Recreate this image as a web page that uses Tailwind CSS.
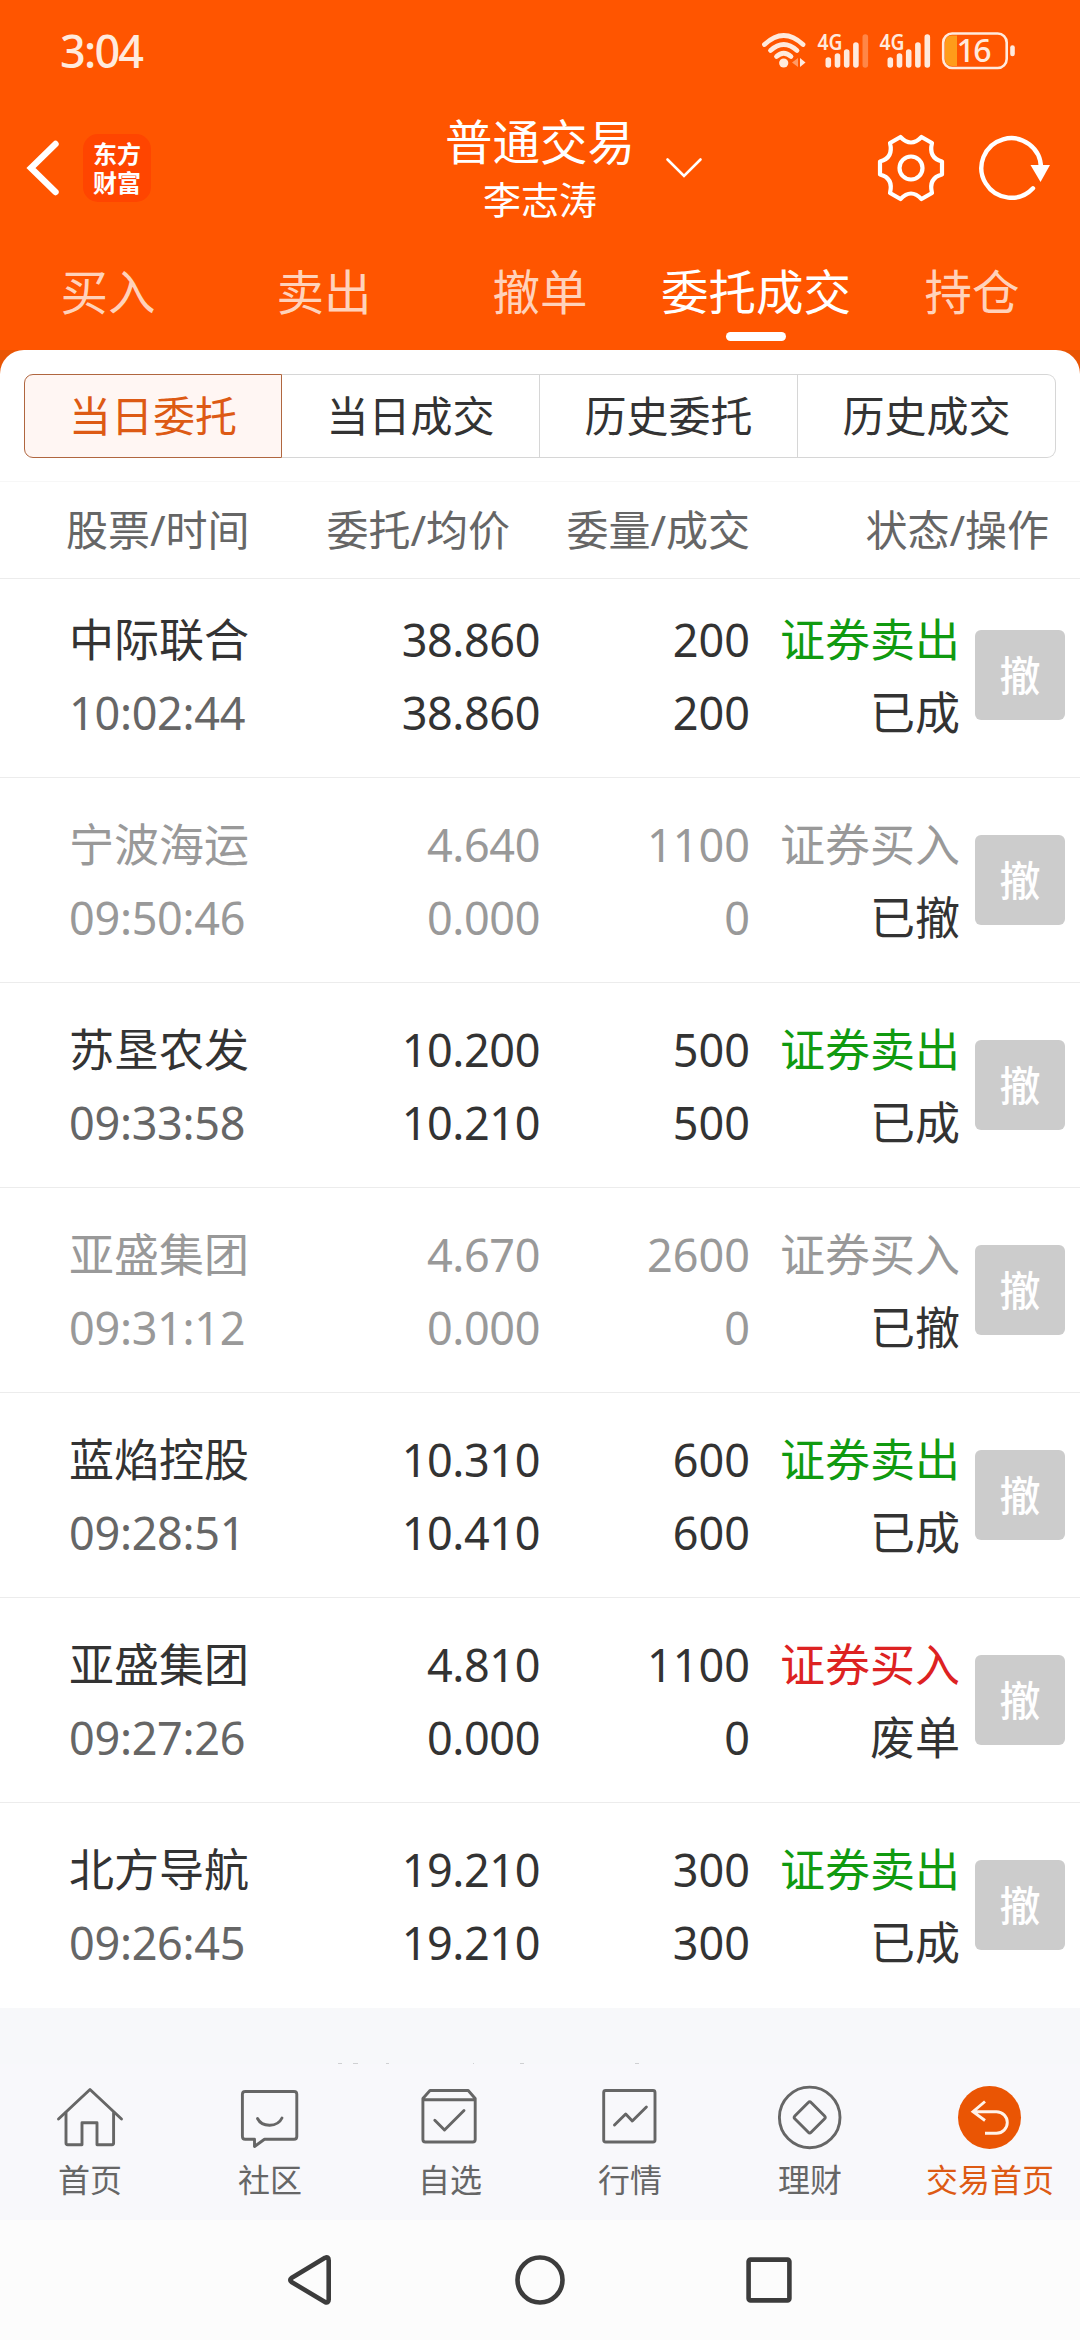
<!DOCTYPE html>
<html lang="zh-CN">
<head>
    <meta charset="UTF-8">
    <meta name="viewport" content="width=device-width, initial-scale=1.0">
    <title>普通交易 - 委托成交</title>
    <script src="https://cdn.jsdelivr.net/npm/@tailwindcss/browser@4"></script>
</head>
<body class="w-[1080px] h-[2340px] overflow-hidden flex flex-col bg-white text-[#333] font-['Noto_Sans','Noto_Sans_CJK_SC',sans-serif]">

    <!-- Header -->
    <header class="h-[350px] shrink-0 bg-[#ff5500] text-white flex flex-col">
        <!-- Status bar -->
        <div class="h-[102px] shrink-0 flex justify-between items-center pl-[60px] pr-[64px] text-[#ffeadd]">
            <span class="text-[45px] leading-[60px] font-medium tracking-[-1.8px]">3:04</span>
            <svg class="w-[256px] h-[60px]" viewBox="760 21 256 60" fill="none" stroke="currentColor" stroke-linecap="round">
                <g stroke-width="4.800">
                    <path d="M764.5 44.500 Q783.700 26.500 803 44.500"/>
                    <path d="M770.500 50.500 Q783.700 38.500 797 50.500"/>
                    <path d="M776.500 56.500 Q783.700 50 791 56.500"/>
                </g>
                <circle cx="783.700" cy="63" r="4.600" fill="currentColor" stroke="none"/>
                <path d="M798 58 V67 L792 62.500Z" fill="#ff9a66" stroke="none"/>
                <path d="M800 58 L805.500 62.500 L800 67Z" fill="currentColor" stroke="none"/>
                <g stroke-width="5.600">
                    <path d="M828.300 60V65M837.500 56V65M846.700 52V65M855.900 45V65"/>
                    <path d="M865.300 37V65" stroke="#ff8647"/>
                    <path d="M890.300 60V65M899.500 56V65M908.700 52V65M917.900 45V65M927.300 37V65"/>
                </g>
                <g fill="currentColor" stroke="none" font-family="Noto Sans, sans-serif" font-weight="600" font-size="22">
                    <text x="817.500" y="50" textLength="25" lengthAdjust="spacingAndGlyphs">4G</text>
                    <text x="879.500" y="50" textLength="25" lengthAdjust="spacingAndGlyphs">4G</text>
                </g>
                <path d="M952 35.500H957V66H952Q945 66 945 59V42.500Q945 35.500 952 35.500Z" fill="#ff9c1a" stroke="none"/>
                <text x="956.500" y="62" fill="currentColor" stroke="none" font-family="Noto Sans, sans-serif" font-weight="500" font-size="32" textLength="35">16</text>
                <rect x="943.200" y="33.500" width="63.500" height="34.500" rx="9" stroke-width="2.600"/>
                <path d="M1012.500 47.500V54" stroke-width="4.600"/>
            </svg>
        </div>

        <!-- Title bar -->
        <div class="h-[138px] shrink-0 grid grid-cols-[1fr_auto_1fr] items-center">
            <div class="flex items-center pl-[24px] pb-[6px]">
                <svg class="w-[40px] h-[60px]" viewBox="24 138.500 40 60" fill="none" stroke="currentColor" stroke-width="6.400" stroke-linecap="round" stroke-linejoin="miter">
                    <path d="M55.500 144.500 L31 168.500 L55.500 192.500"/>
                </svg>
                <div class="ml-[19px] w-[68px] h-[68px] rounded-[15px] bg-[#ff4500] flex flex-col items-center justify-center text-[24px] leading-[29px] font-bold">
                    <span>东方</span>
                    <span>财富</span>
                </div>
            </div>
            <div class="relative flex flex-col items-center pb-[5px]">
                <div class="text-[47.5px] leading-[61px]">普通交易</div>
                <div class="text-[38px] leading-[55px]">李志涛</div>
                <svg class="absolute left-full top-[43px] ml-[27px] w-[44px] h-[28px]" viewBox="662 154 44 28" fill="none" stroke="currentColor" stroke-width="2.600" stroke-linecap="round">
                    <path d="M667.500 159.500 L684 176 L700.500 159.500"/>
                </svg>
            </div>
            <div class="flex justify-end items-center gap-[30px] pr-[28px] pb-[6px]">
                <svg class="w-[70px] h-[70px]" viewBox="-35 -35 70 70" fill="none" stroke="currentColor" stroke-width="4.200" stroke-linejoin="round">
                    <path d="M-10.500-31 Q0-20 10.500-31 L21-25 Q17.300-10 31-6.500 V6.500 Q17.300 10 21 25 L10.500 31 Q0 20 -10.500 31 L-21 25 Q-17.300 10 -31 6.500 V-6.500 Q-17.300-10 -21-25Z"/>
                    <circle r="11.500"/>
                </svg>
                <svg class="w-[76px] h-[70px]" viewBox="976 133 76 70" fill="none" stroke="currentColor" stroke-width="4.400" stroke-linecap="round">
                    <path d="M1041 168 A29.800 29.800 0 1 0 1033 188.300"/>
                    <path d="M1030.500 165 H1050 L1040.500 182Z" fill="currentColor" stroke="none"/>
                </svg>
            </div>
        </div>

        <!-- Main tabs -->
        <nav class="grid grid-cols-5 text-center text-[47.5px] leading-[64px] text-[#ffd2bb] pt-[20px]">
            <a>买入</a>
            <a>卖出</a>
            <a>撤单</a>
            <a class="text-white flex flex-col items-center">
                <span>委托成交</span>
                <span class="w-[60px] h-[9px] mt-[8px] rounded-full bg-white"></span>
            </a>
            <a>持仓</a>
        </nav>
    </header>

    <main class="shrink-0 bg-[#e95504]">
        <div class="bg-white rounded-t-[24px] pt-[24px]">
            <!-- Segmented control -->
            <div class="mx-[24px] h-[84px] grid grid-cols-4 text-[42px] text-center leading-[82px]">
                <a class="border border-[#b0663f] rounded-l-[9px] bg-[#fff6f3] text-[#dd5a14]">当日委托</a>
                <a class="border border-l-0 border-[#d6d6d6]">当日成交</a>
                <a class="border border-l-0 border-[#d6d6d6]">历史委托</a>
                <a class="border border-l-0 border-[#d6d6d6] rounded-r-[9px]">历史成交</a>
            </div>

            <!-- Column titles -->
            <div class="mt-[23px] h-[98px] border-y border-t-[#f7f7f7] border-b-[#ececec] grid grid-cols-[510px_240px_299px] text-[42px] leading-[96px] text-[#666] text-right">
                <div class="flex justify-between pl-[66px]"><span>股票/时间</span><span>委托/均价</span></div>
                <span>委量/成交</span>
                <span>状态/操作</span>
            </div>
        </div>
    </main>

    <!-- Order rows -->
    <section id="orderList" class="h-[1429px] shrink-0 overflow-hidden flex flex-col justify-end bg-white"></section>

    <!-- Next line of the list, nearly hidden by the tab bar -->
    <div class="h-[56px] shrink-0 bg-[#f7f8fa] flex items-end">
        <svg class="w-[1080px] h-[1px]" viewBox="0 0 1080 1" fill="#cfd0d2">
            <path d="M338 0h4v1h-4zM353 0h5v1h-5zM386 0h3v1h-3zM473 0h1v1h-1zM520 0h4v1h-4zM635 0h4v1h-4z"/>
        </svg>
    </div>

    <!-- Bottom tab bar -->
    <nav class="h-[156px] shrink-0 bg-[#f8f8fb] pt-[16px] grid grid-cols-6 text-[32px] leading-[46px] text-[#666]">
        <a class="flex flex-col items-center gap-[5px]">
            <svg class="w-[72px] h-[72px]" viewBox="0 0 72 72" fill="none" stroke="currentColor" stroke-width="2.900" stroke-linecap="round" stroke-linejoin="round">
                <path d="M4.500 39 L36 9.500 L67.500 39"/>
                <path d="M12 33V63Q12 64.700 13.700 64.700H28V42.700H43V64.700H58Q59.600 64.700 59.600 63V33"/>
            </svg>
            <span>首页</span>
        </a>
        <a class="flex flex-col items-center gap-[5px]">
            <svg class="w-[72px] h-[72px]" viewBox="0 0 72 72" fill="none" stroke="currentColor" stroke-width="2.900" stroke-linecap="round" stroke-linejoin="round">
                <path d="M11 11.500H60Q62.800 11.500 62.800 14.300V56.500Q62.800 59.300 60 59.300H30.500L20.500 66.500V59.300H11.200Q8.400 59.300 8.400 56.500V14.300Q8.400 11.500 11.200 11.500Z"/>
                <path d="M23.500 38.500C28 47.500 43.500 47.500 48 38"/>
            </svg>
            <span>社区</span>
        </a>
        <a class="flex flex-col items-center gap-[5px]">
            <svg class="w-[72px] h-[72px]" viewBox="0 0 72 72" fill="none" stroke="currentColor" stroke-width="2.900" stroke-linecap="round" stroke-linejoin="round">
                <path d="M8.900 18.500 L16 10.500H54.200L61.200 18.500V59.500Q61.200 62 58.700 62H11.400Q8.900 62 8.900 59.500ZM9 19.800H61"/>
                <path d="M20.800 40.200 L30.500 50 L50 30.500"/>
            </svg>
            <span>自选</span>
        </a>
        <a class="flex flex-col items-center gap-[5px]">
            <svg class="w-[72px] h-[72px]" viewBox="0 0 72 72" fill="none" stroke="currentColor" stroke-width="2.900" stroke-linecap="round" stroke-linejoin="round">
                <rect x="9.700" y="10.500" width="51.300" height="51.500" rx="2"/>
                <path d="M20.500 45 L31.700 34 L38.300 41 L52.400 27"/>
            </svg>
            <span>行情</span>
        </a>
        <a class="flex flex-col items-center gap-[5px]">
            <svg class="w-[72px] h-[72px]" viewBox="0 0 72 72" fill="none" stroke="currentColor" stroke-width="2.900" stroke-linejoin="round">
                <circle cx="35.700" cy="37.400" r="30.300"/>
                <path d="M34.300 22.500Q35.700 21 37.100 22.500L50.600 36Q52 37.400 50.600 38.800L37.100 52.300Q35.700 53.800 34.300 52.300L20.800 38.800Q19.400 37.400 20.800 36Z"/>
            </svg>
            <span>理财</span>
        </a>
        <a class="flex flex-col items-center gap-[5px] text-[#dd5a14]">
            <svg class="w-[72px] h-[72px]" viewBox="0 0 72 72" fill="none" stroke="#fff3ea" stroke-width="2.900">
                <circle cx="35.500" cy="37.400" r="31.500" fill="#ea5504" stroke="none"/>
                <path d="M31 21.500 L19 31.700 L31 40.500M19 31.700H42.500A10.800 10.800 0 0 1 42.500 53.300H31"/>
            </svg>
            <span>交易首页</span>
        </a>
    </nav>

    <!-- System navigation -->
    <div class="h-[120px] shrink-0 bg-[#fcfcfc] flex justify-center items-center gap-[169px] text-[#3c3c3c]">
        <svg class="w-[60px] h-[60px]" viewBox="280 2250 60 60" fill="none" stroke="currentColor" stroke-width="4.600" stroke-linejoin="round">
            <path d="M324 2257.800 L290.500 2278 Q288 2280 290.500 2282 L324 2302 Q327.700 2303.500 327.700 2299.500 V2260.500 Q327.700 2256.300 324 2257.800Z"/>
        </svg>
        <svg class="w-[60px] h-[60px]" viewBox="-30 -30 60 60" fill="none" stroke="currentColor" stroke-width="4.600">
            <circle r="22.500"/>
        </svg>
        <svg class="w-[60px] h-[60px]" viewBox="-30 -30 60 60" fill="none" stroke="currentColor" stroke-width="4.600">
            <rect x="-20.400" y="-20.400" width="40.800" height="40.800" rx="2"/>
        </svg>
    </div>

    <script>
        // name, time, order price, avg price, order qty, filled qty, direction, state
        const orders = [
            ['中际联合', '10:02:44', '38.860', '38.860', '200', '200', '证券卖出', '已成'],
            ['宁波海运', '09:50:46', '4.640', '0.000', '1100', '0', '证券买入', '已撤'],
            ['苏垦农发', '09:33:58', '10.200', '10.210', '500', '500', '证券卖出', '已成'],
            ['亚盛集团', '09:31:12', '4.670', '0.000', '2600', '0', '证券买入', '已撤'],
            ['蓝焰控股', '09:28:51', '10.310', '10.410', '600', '600', '证券卖出', '已成'],
            ['亚盛集团', '09:27:26', '4.810', '0.000', '1100', '0', '证券买入', '废单'],
            ['北方导航', '09:26:45', '19.210', '19.210', '300', '300', '证券卖出', '已成'],
        ];

        document.getElementById('orderList').innerHTML = orders.map(o => {
            const cancelled = o[7] === '已撤';
            const base = cancelled ? 'text-[#999]' : 'text-[#333]';
            const time = cancelled ? 'text-[#999]' : 'text-[#666]';
            const side = cancelled ? 'text-[#999]' : o[6] === '证券卖出' ? 'text-[#109a10]' : 'text-[#dd2222]';
            return `
            <div class="h-[205px] shrink-0 border-b border-[#ececec] last:border-white grid grid-cols-[300px_240px_210px_210px_1fr] text-[45px] leading-[73px] text-right pt-[30px] ${base}">
                <div class="text-left pl-[69px]"><div class="h-[73px]">${o[0]}</div><div class="h-[73px] tracking-[-0.3px] ${time}">${o[1]}</div></div>
                <div class="tracking-[-0.4px]"><div class="h-[73px]">${o[2]}</div><div class="h-[73px]">${o[3]}</div></div>
                <div><div class="h-[73px]">${o[4]}</div><div class="h-[73px]">${o[5]}</div></div>
                <div><div class="h-[73px] ${side}">${o[6]}</div><div class="h-[73px] text-[#333]">${o[7]}</div></div>
                <button class="ml-[15px] mt-[27px] w-[90px] h-[90px] rounded-[6px] bg-[#ccc] text-white text-[41px] leading-[90px] font-medium">撤</button>
            </div>`;
        }).join('');
    </script>
</body>
</html>
